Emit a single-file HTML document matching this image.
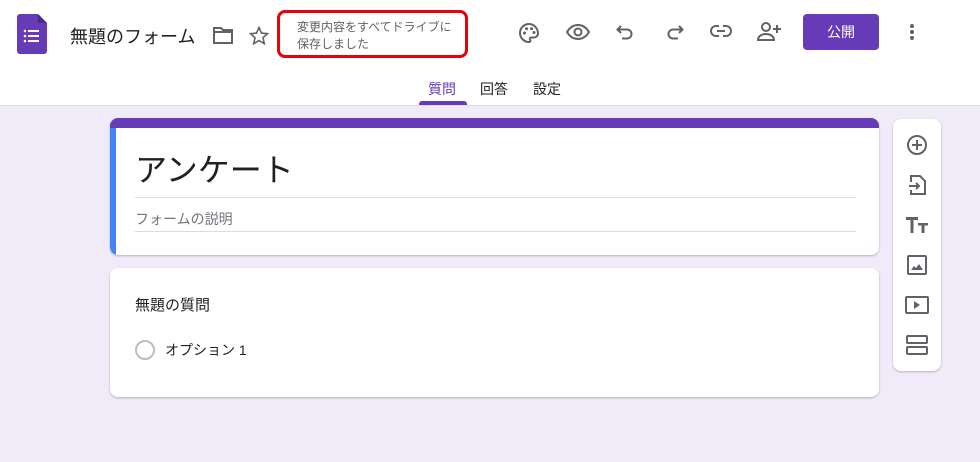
<!DOCTYPE html>
<html><head><meta charset="utf-8"><style>
*{margin:0;padding:0;box-sizing:border-box}
body{width:980px;height:462px;background:#f0ebf8;font-family:"Liberation Sans","Noto Sans CJK JP",sans-serif;position:relative;overflow:hidden;color:#202124}
.hdr{position:absolute;left:0;top:0;width:980px;height:106px;background:#fff;border-bottom:1px solid #dadce0}
.a{position:absolute}
svg.i{position:absolute;fill:none;stroke:#5f6368;stroke-width:2}
.card{position:absolute;background:#fff;border-radius:8px;box-shadow:0 1px 2px rgba(0,0,0,.25)}
</style></head><body>
<div class="hdr">
<svg class="a" style="left:17px;top:14px" width="30" height="40" viewBox="0 0 30 40"><path d="M3 0h18l9 9v28a3 3 0 0 1-3 3H3a3 3 0 0 1-3-3V3a3 3 0 0 1 3-3z" fill="#673ab7"/><path d="M21 0v9h9z" fill="#4a2a91"/><g fill="#fff"><circle cx="8" cy="17" r="1.3"/><circle cx="8" cy="22" r="1.3"/><circle cx="8" cy="27" r="1.3"/><rect x="11" y="16" width="11" height="2"/><rect x="11" y="21" width="11" height="2"/><rect x="11" y="26" width="11" height="2"/></g></svg>
<div class="a" style="left:70px;top:23px;font-size:18px">無題のフォーム</div>
<svg class="i" style="left:213px;top:27px" width="20" height="17" viewBox="0 0 20 17"><path d="M1 1h7l2 2h9v13H1z M1 5h18"/></svg>
<svg class="i" style="left:249px;top:26px;stroke-width:1.6" width="20" height="19" viewBox="0 0 20 19"><path d="M10 1.5l2.5 5.6 6 .6-4.5 4 1.3 6-5.3-3.1-5.3 3.1 1.3-6-4.5-4 6-.6z"/></svg>
<div class="a" style="left:277px;top:10px;width:191px;height:48px;border:3px solid #e8000b;border-radius:8px;font-size:12px;color:#5f6368;padding:6px 0 0 17px;line-height:17px">変更内容をすべてドライブに<br>保存しました</div>
<svg class="i" style="left:518px;top:22px" width="22" height="22" viewBox="0 0 22 22"><path d="M11 2a9 9 0 0 0 0 18c1.5 0 1.7-1.3 1-2.2-.7-1 0-2.3 1.2-2.3H16a4 4 0 0 0 4-4c0-5-4-9.5-9-9.5z"/><g fill="#5f6368" stroke="none"><circle cx="6.5" cy="11" r="1.5"/><circle cx="8.5" cy="6.8" r="1.5"/><circle cx="13.5" cy="6.8" r="1.5"/><circle cx="16" cy="10.5" r="1.5"/></g></svg>
<svg class="i" style="left:566px;top:23px" width="24" height="18" viewBox="0 0 24 18"><path d="M1 9c3-5 7-7 11-7s8 2 11 7c-3 5-7 7-11 7S4 14 1 9z"/><circle cx="12" cy="9" r="3.5"/></svg>
<svg class="i" style="left:616px;top:24px" width="20" height="18" viewBox="0 0 20 18"><path d="M5 2L1.5 5.5 5 9M2 5.5h9a4.5 4.5 0 0 1 0 9H6"/></svg>
<svg class="i" style="left:664px;top:24px" width="20" height="18" viewBox="0 0 20 18"><path d="M15 2l3.5 3.5L15 9M18 5.5H9a4.5 4.5 0 0 0 0 9h5"/></svg>
<svg class="i" style="left:710px;top:23px" width="22" height="16" viewBox="0 0 22 16"><path d="M9 3H6a5 5 0 0 0 0 10h3M13 3h3a5 5 0 0 1 0 10h-3M7 8h8"/></svg>
<svg class="i" style="left:757px;top:21px" width="24" height="20" viewBox="0 0 24 20"><circle cx="9" cy="6" r="4"/><path d="M1 19c0-4 4-6 8-6s8 2 8 6zM20 4v8M16 8h8"/></svg>
<div class="a" style="left:803px;top:14px;width:76px;height:36px;background:#673ab7;border-radius:4px;color:#fff;font-size:14px;text-align:center;line-height:36px">公開</div>
<div class="a" style="left:910px;top:24px;width:4px;height:4px;border-radius:2px;background:#5f6368;box-shadow:0 6px 0 #5f6368,0 12px 0 #5f6368"></div>
<div class="a" style="left:428px;top:79px;font-size:14px;color:#673ab7">質問</div>
<div class="a" style="left:419px;top:101px;width:48px;height:4px;background:#673ab7;border-radius:3px 3px 0 0"></div>
<div class="a" style="left:480px;top:79px;font-size:14px;color:#202124">回答</div>
<div class="a" style="left:533px;top:79px;font-size:14px;color:#202124">設定</div>
</div>
<div class="card" style="left:110px;top:118px;width:769px;height:137px;overflow:hidden">
<div class="a" style="left:0;top:0;width:769px;height:10px;background:#673ab7"></div>
<div class="a" style="left:0;top:10px;width:6px;height:127px;background:#4285f4"></div>
<div class="a" style="left:25px;top:27px;font-size:32px">アンケート</div>
<div class="a" style="left:25px;top:79px;width:721px;height:1px;background:#dadce0"></div>
<div class="a" style="left:25px;top:91px;font-size:14px;color:#70757a">フォームの説明</div>
<div class="a" style="left:25px;top:113px;width:721px;height:1px;background:#dadce0"></div>
</div>
<div class="card" style="left:110px;top:268px;width:769px;height:129px">
<div class="a" style="left:25px;top:26px;font-size:15px">無題の質問</div>
<div class="a" style="left:25px;top:72px;width:20px;height:20px;border:2px solid #bdbdbd;border-radius:50%"></div>
<div class="a" style="left:55px;top:72px;font-size:14px">オプション 1</div>
</div>
<div class="card" style="left:893px;top:119px;width:48px;height:252px">
<svg class="i" style="left:13px;top:15px" width="22" height="22" viewBox="0 0 22 22"><circle cx="11" cy="11" r="9"/><path d="M11 6v10M6 11h10"/></svg>
<svg class="i" style="left:15px;top:55px" width="18" height="22" viewBox="0 0 18 22"><path d="M3 8V2h9l5 5v13H3v-4M1 12h10M8 9l3 3-3 3"/></svg>
<svg class="a" style="left:13px;top:97px" width="22" height="18" viewBox="0 0 22 18"><path d="M0 1h12v3H7.5v13h-3V4H0zM12 7h10v2.5h-3.5V17h-3V9.5H12z" fill="#5f6368"/></svg>
<svg class="i" style="left:14px;top:136px" width="20" height="20" viewBox="0 0 20 20"><rect x="1" y="1" width="18" height="18" rx="1"/><path d="M4 15l3-4 2 2 3-4 4 6z" fill="#5f6368" stroke="none"/></svg>
<svg class="i" style="left:12px;top:177px" width="24" height="18" viewBox="0 0 24 18"><rect x="1" y="1" width="22" height="16" rx="1"/><path d="M9 5v8l6-4z" fill="#5f6368" stroke="none"/></svg>
<svg class="i" style="left:13px;top:216px" width="22" height="20" viewBox="0 0 22 20"><rect x="1" y="1" width="20" height="7" rx="1"/><rect x="1" y="12" width="20" height="7" rx="1"/></svg>
</div>
</body></html>
